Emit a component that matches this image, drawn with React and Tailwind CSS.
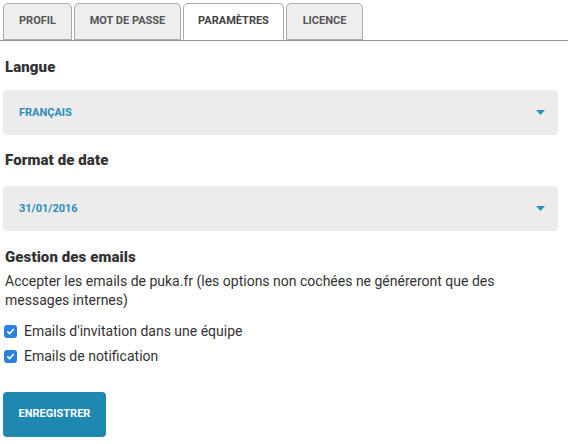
function Tab({ label, active }) {
  return (
    <div
      className={`h-[37px] flex items-center justify-center border border-[#aaa] rounded-t-[5px] text-[11px] font-bold ${active ? 'bg-white border-b-white text-[#444] -mb-px' : 'bg-[#eee] text-[#555]'}`}
    >
      {label}
    </div>
  );
}

function Select({ value }) {
  return (
    <div className="ml-[3px] mr-[10px] h-[45px] rounded-[4px] bg-[#ececec] flex items-center justify-between pl-4 pr-[13px]">
      <span className="text-[11px] font-bold text-[#2b8cb8] mt-[1px]">{value}</span>
      <svg width="9" height="5" viewBox="0 0 9 5"><path d="M0 0h9L4.5 5z" fill="#2b8cb8" /></svg>
    </div>
  );
}

function Check({ label }) {
  return (
    <div className="flex items-center gap-[7px] ml-[4px] h-[25px]">
      <span className="w-[13px] h-[13px] rounded-[3px] bg-[#2d7fe0] flex items-center justify-center">
        <svg width="9" height="9" viewBox="0 0 9 9"><path d="M1.8 4.8l1.9 1.8 3.6-4.2" stroke="white" strokeWidth="1.6" fill="none" strokeLinecap="round" strokeLinejoin="round" /></svg>
      </span>
      <span className="text-[14px] text-[#333]">{label}</span>
    </div>
  );
}

export default function App() {
  return (
    <div className="w-[568px] h-[444px] bg-white font-['Roboto',sans-serif] text-[#333] overflow-hidden">
      <div className="flex pl-[3px] pt-[3px] gap-[2px] border-b border-[#999]">
        <div className="w-[69px]"><Tab label="PROFIL" /></div>
        <div className="w-[107px]"><Tab label="MOT DE PASSE" /></div>
        <div className="w-[101px]"><Tab label="PARAMÈTRES" active /></div>
        <div className="w-[77px]"><Tab label="LICENCE" /></div>
      </div>

      <h2 className="text-[15px] font-black ml-[5px] mt-[16px] leading-[20px] tracking-[0.1px]">Langue</h2>
      <div className="mt-[13px]"><Select value="FRANÇAIS" /></div>

      <h2 className="text-[15px] font-black ml-[5px] mt-[15px] leading-[20px] tracking-[0.1px]">Format de date</h2>
      <div className="mt-[16px]"><Select value="31/01/2016" /></div>

      <h2 className="text-[15px] font-black ml-[5px] mt-[16px] leading-[20px] tracking-[0.1px]">Gestion des emails</h2>
      <p className="ml-[5px] mr-[20px] mt-[5px] text-[14px] leading-[19px]">
        Accepter les emails de puka.fr (les options non cochées ne généreront que des messages internes)
      </p>
      <div className="mt-[9px]">
        <Check label="Emails d'invitation dans une équipe" />
        <Check label="Emails de notification" />
      </div>

      <button className="ml-[3px] mt-[23px] w-[103px] h-[45px] rounded-[4px] bg-[#1f88b0] text-white text-[11px] font-bold">
        ENREGISTRER
      </button>
    </div>
  );
}
